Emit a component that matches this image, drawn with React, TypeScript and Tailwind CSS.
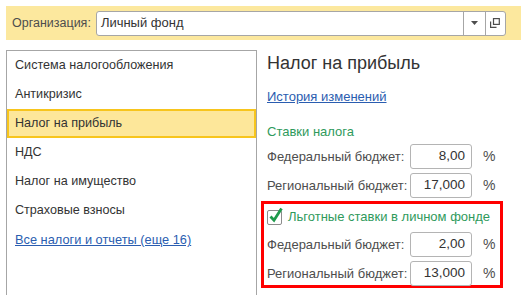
import React from "react";

const items = [
  "Система налогообложения",
  "Антикризис",
  "Налог на прибыль",
  "НДС",
  "Налог на имущество",
  "Страховые взносы",
];

const RateRow = ({ label, value }: { label: string; value: string }) => (
  <div className="flex items-center h-[29px]">
    <span className="w-[143px] text-[13px] text-[#4d4d4d]">{label}</span>
    <div className="w-[62px] h-[25px] border border-[#b4b4b4] rounded-[3px] bg-white flex items-center justify-end pr-[6px] text-[13.5px] text-[#333]">
      {value}
    </div>
    <span className="ml-[11px] text-[14px] text-[#4d4d4d]">%</span>
  </div>
);

const App = () => {
  return (
    <div className="w-[521px] h-[295px] overflow-hidden bg-white font-['Liberation_Sans',Arial,sans-serif]">
      {/* Organization bar */}
      <div className="mt-[6px] ml-[6px] h-[34px] bg-[#fce89e] flex items-center">
        <span className="pl-[6px] text-[12.5px] text-[#4d4d4d]">Организация:</span>
        <div className="ml-[5px] w-[410px] h-[25px] border border-[#a6a6a6] rounded-[3px] bg-white flex items-stretch">
          <span className="flex-1 pl-[4px] flex items-center text-[13px] text-[#333]">Личный фонд</span>
          <div className="w-[22px] border-l border-[#a6a6a6] flex items-center justify-center">
            <svg width="7" height="4" viewBox="0 0 7 4">
              <path d="M0 0h7L3.5 4z" fill="#4d4d4d" />
            </svg>
          </div>
          <div className="w-[20px] border-l border-[#a6a6a6] flex items-center justify-center">
            <svg width="10" height="10" viewBox="0 0 10 10" fill="none" stroke="#4d4d4d" strokeWidth="1.2">
              <rect x="3.5" y="0.6" width="5.8" height="5.8" />
              <path d="M0.6 3.5v5.9h5.9" />
            </svg>
          </div>
        </div>
      </div>

      <div className="mt-[10px] flex">
        {/* Left menu */}
        <div className="ml-[6px] w-[251px] h-[250px] border border-b-0 border-[#a6a6a6] flex flex-col">
          {items.map((t) =>
            t === "Налог на прибыль" ? (
              <div key={t} className="h-[29px] flex items-center pl-[6px] bg-[#fde79a] border-2 border-[#f7c51d] text-[12.6px] text-[#333]">
                {t}
              </div>
            ) : (
              <div key={t} className="h-[29px] flex items-center pl-[8px] text-[12.6px] text-[#333]">
                {t}
              </div>
            )
          )}
          <div className="h-[29px] flex items-center pl-[8px] text-[12.8px] text-[#2a5db0] underline">
            Все налоги и отчеты (еще 16)
          </div>
        </div>

        {/* Right content */}
        <div className="pl-[10px] flex flex-col">
          <h1 className="mt-[1px] text-[18px] leading-[24px] text-[#333]">Налог на прибыль</h1>
          <a className="mt-[14px] text-[13px] leading-[16px] text-[#2a5db0] underline">История изменений</a>
          <div className="mt-[19px] text-[13px] leading-[16px] text-[#2f9a5c]">Ставки налога</div>
          <div className="mt-[2px]">
            <RateRow label="Федеральный бюджет:" value="8,00" />
            <RateRow label="Региональный бюджет:" value="17,000" />
          </div>
          <div className="mt-[1px] -ml-[6px] w-[242px] h-[87px] border-[3px] border-[#ff0000] pl-[3px]">
            <div className="flex items-center h-[26px]">
              <div className="w-[15px] h-[15px] border border-[#8c8c8c] rounded-[2px] bg-white relative">
                <svg className="absolute -top-[4px] left-[1px]" width="14" height="16" viewBox="0 0 14 16" fill="none">
                  <path d="M1.5 9.5l3.5 3.8L12.5 1.5" stroke="#1f9a4c" strokeWidth="2.8" />
                </svg>
              </div>
              <span className="ml-[6px] text-[13px] text-[#2f9a5c]">Льготные ставки в личном фонде</span>
            </div>
            <RateRow label="Федеральный бюджет:" value="2,00" />
            <RateRow label="Региональный бюджет:" value="13,000" />
          </div>
        </div>
      </div>
    </div>
  );
};

export default App;
